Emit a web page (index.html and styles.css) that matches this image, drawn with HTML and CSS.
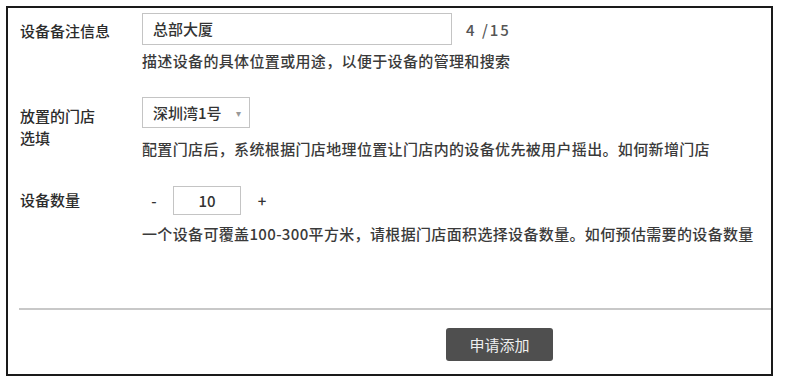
FILE: index.html
```html
<!DOCTYPE html>
<html lang="zh-CN">
<head>
    <meta charset="UTF-8">
    <meta name="viewport" content="width=device-width, initial-scale=1.0">
    <title>添加设备</title>
    <link rel="stylesheet" href="styles.css">
</head>
<body>
    <div class="panel">
        <!-- 设备备注 -->
        <div class="form-row row-remark">
            <div class="label">设备备注信息</div>
            <div class="field">
                <div class="inline">
                    <div class="text-input">总部大厦</div>
                    <span class="counter">4 /15</span>
                </div>
                <p class="tip tip-remark">描述设备的具体位置或用途，以便于设备的管理和搜索</p>
            </div>
        </div>

        <!-- 门店 -->
        <div class="form-row row-shop">
            <div class="label label-shop">放置的门店<br>选填</div>
            <div class="field">
                <div class="select">
                    <span>深圳湾1号</span>
                    <span class="arrow">▾</span>
                </div>
                <p class="tip tip-shop">配置门店后，系统根据门店地理位置让门店内的设备优先被用户摇出。如何新增门店</p>
            </div>
        </div>

        <!-- 数量 -->
        <div class="form-row row-count">
            <div class="label label-count">设备数量</div>
            <div class="field">
                <div class="inline">
                    <span class="step step-minus">-</span>
                    <div class="number-input">10</div>
                    <span class="step step-plus">+</span>
                </div>
                <p class="tip tip-count">一个设备可覆盖100-300平方米，请根据门店面积选择设备数量。如何预估需要的设备数量</p>
            </div>
        </div>

        <div class="divider"></div>

        <div class="footer">
            <button class="submit-btn">申请添加</button>
        </div>
    </div>
</body>
</html>
```

FILE: styles.css
```css
body {
    margin: 0;
    background-color: #ffffff;
    font-family: "Noto Sans CJK SC", "Noto Sans", sans-serif;
    font-size: 15px;
    font-weight: 500;
    color: #333333;
}
.panel {
    margin: 6px 0 0 6px;
    width: 763px;
    height: 366px;
    border: 2px solid #1a1a1a;
    display: flex;
    flex-direction: column;
}
.form-row {
    display: flex;
}
.row-remark {
    margin-top: 5px;
}
.row-shop {
    margin-top: 26px;
}
.row-count {
    margin-top: 27px;
}
.label {
    width: 122px;
    padding-left: 12px;
    padding-top: 8px;
    line-height: 20px;
    color: #2b2b2b;
}
.label-shop {
    padding-top: 8px;
    line-height: 22px;
}
.label-count {
    padding-top: 4px;
}
.field {
    flex: 1;
}
.inline {
    display: flex;
    align-items: center;
}
.text-input {
    width: 298px;
    height: 30px;
    line-height: 30px;
    padding-left: 10px;
    border: 1px solid #c4c4c4;
}
.counter {
    margin-left: 14px;
    color: #555555;
    letter-spacing: 2px;
}
.tip {
    margin: 0;
    line-height: 20px;
    color: #3a3a3a;
    letter-spacing: 0.35px;
}
.tip-remark {
    margin-top: 6px;
}
.tip-shop {
    margin-top: 11px;
}
.tip-count {
    margin-top: 9px;
}
.select {
    width: 96px;
    height: 29px;
    padding-left: 10px;
    border: 1px solid #c4c4c4;
    display: flex;
    align-items: center;
    justify-content: space-between;
}
.select .arrow {
    width: 22px;
    text-align: center;
    font-size: 10px;
    color: #999999;
}
.step {
    width: 24px;
    text-align: center;
    font-size: 15px;
}
.step-minus {
    margin-right: 7px;
}
.step-plus {
    margin-left: 9px;
}
.number-input {
    width: 66px;
    height: 27px;
    line-height: 27px;
    text-align: center;
    border: 1px solid #c4c4c4;
}
.divider {
    margin: 64px 0 0 11px;
    height: 2px;
    background-color: #c8c8c8;
}
.footer {
    padding: 18px 0 0 438px;
}
.submit-btn {
    width: 107px;
    height: 33px;
    padding: 0;
    border: none;
    border-radius: 3px;
    background-color: #4f4f4f;
    color: #eeeeee;
    font-family: inherit;
    font-size: 15px;
    font-weight: 400;
}
```
